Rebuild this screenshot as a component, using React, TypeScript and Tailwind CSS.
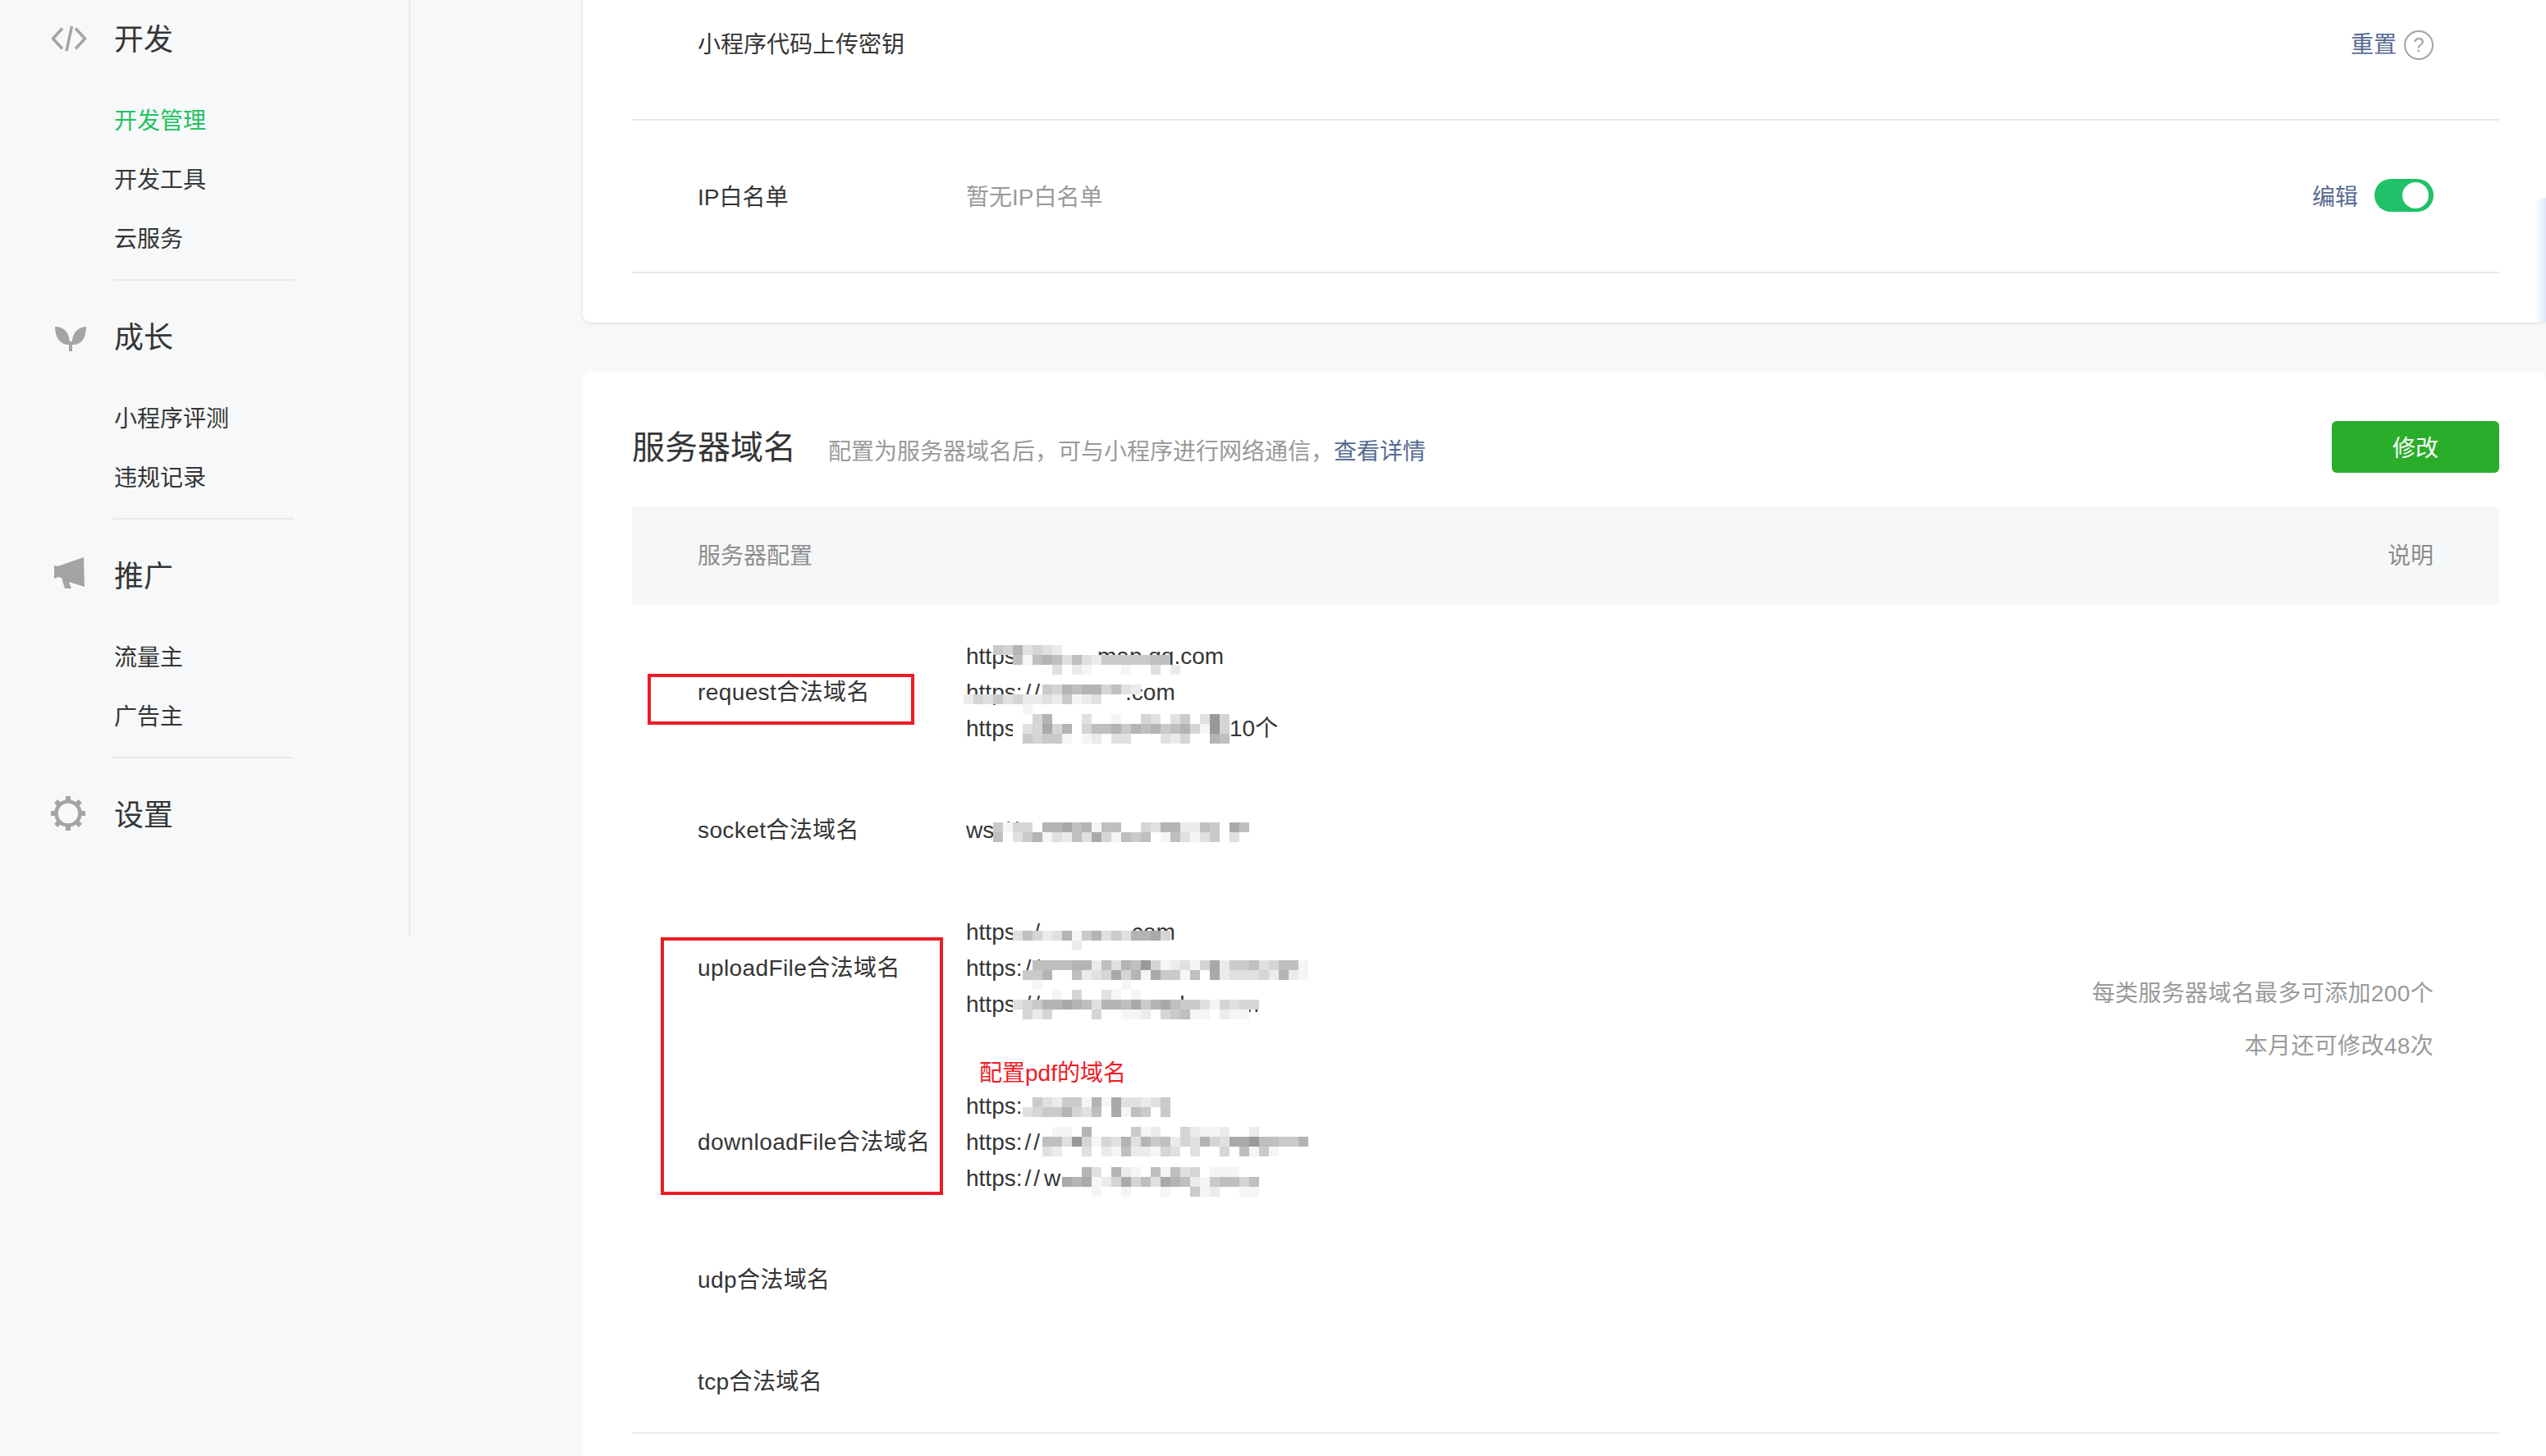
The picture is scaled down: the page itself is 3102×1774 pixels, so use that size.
const SHADES: Record<string, string> = {
  "0": "bg-white",
  "1": "bg-[#f5f5f5]",
  "2": "bg-[#ebebeb]",
  "3": "bg-[#e0e0e0]",
  "4": "bg-[#d5d5d5]",
  "5": "bg-[#cacaca]",
  "6": "bg-[#bfbfbf]",
  "7": "bg-[#b4b4b4]",
  "8": "bg-[#a9a9a9]",
  "9": "bg-[#999999]",
  ".": "",
};

interface DomainLine {
  scheme?: string;
  gap?: number;
  tail?: string;
  left: number;
  top: number;
  rows: string[];
}

const REQUEST_LINES: DomainLine[] = [
  {
    gap: 67,
    tail: "map.qq.com",
    left: 33,
    top: 9,
    rows: ["5473432", "..6167636325555566", "......3021000100302"],
  },
  {
    gap: 101,
    tail: ".com",
    left: -3,
    top: 13,
    rows: ["........5476774632", "24353422325123", "......1"],
  },
  {
    gap: 228,
    tail: "10个",
    left: 57,
    top: 5,
    rows: ["0047000300100430350394", "0348470466757675674194", "0545510120330003240076"],
  },
];

const SOCKET_LINES: DomainLine[] = [
  {
    scheme: "ws",
    left: 33,
    top: 13,
    rows: ["51440778671660043772265086", "6035713263841656016313503."],
  },
];

const UPLOAD_LINES: DomainLine[] = [
  {
    gap: 101,
    tail: ".com",
    left: 57,
    top: 9,
    rows: ["00", "3642371573537784", "......2"],
  },
  {
    left: 69,
    top: 13,
    rows: [".6666772637694123148255634661", "55700623484718551608233342721", ".1........1"],
  },
  {
    gap: 158,
    tail: "doc.com",
    left: 57,
    top: 5,
    rows: ["....10400310100", "3457787637768578655314344", "042400004001120456110211"],
  },
];

const DOWNLOAD_LINES: DomainLine[] = [
  { left: 69, top: 12, rows: ["053255171833235", "345574360816505"] },
  {
    left: 93,
    top: 4,
    rows: [".110700005120042112002", "663941437375624374388966557", "320030216221430300406151"],
  },
  {
    gap: 2,
    tail: "w",
    left: 117,
    top: 9,
    rows: ["..7307210616340111", "87812484638762156646", "...1..1...1..512..11"],
  },
];

function Mosaic({ left, top, rows }: { left: number; top: number; rows: string[] }) {
  return (
    <div className="absolute flex flex-col" style={{ left, top }}>
      {rows.map((row, i) => (
        <div key={i} className="flex">
          {row.split("").map((cell, j) => (
            <span key={j} className={`h-3 w-3 shrink-0 ${SHADES[cell]}`} />
          ))}
        </div>
      ))}
    </div>
  );
}

function ValueLine({ line }: { line: DomainLine }) {
  return (
    <div className="relative h-11 whitespace-nowrap leading-[45px]">
      {line.scheme ?? "https"}
      <span className="tracking-[3px]">://</span>
      {line.tail && (
        <>
          <span className="inline-block" style={{ width: line.gap }} />
          {line.tail}
        </>
      )}
      <Mosaic left={line.left} top={line.top} rows={line.rows} />
    </div>
  );
}

function ServerRow({ label, lines }: { label: string; lines?: DomainLine[] }) {
  return (
    <div className="flex items-center py-10">
      <div className="h-11 w-[407px] shrink-0 pl-20 leading-[45px] tracking-[0.4px]">{label}</div>
      <div className="min-h-11 flex-1">
        {lines?.map((line, i) => <ValueLine key={i} line={line} />)}
      </div>
    </div>
  );
}

function CodeIcon() {
  return (
    <svg width="44" height="32" viewBox="0 0 44 32" fill="none" stroke="#a3a4a5" strokeWidth="3.5" className="-mt-1">
      <path d="M14 3.5 2.5 16 14 28.5" />
      <path d="M25.5 1 19 31" />
      <path d="M30 3.5 41.5 16 30 28.5" />
    </svg>
  );
}

function SproutIcon() {
  return (
    <svg width="38" height="31" viewBox="0 0 38 31" fill="#a3a4a5" className="ml-[5px]">
      <path d="M0 1C10 1 18 7 18 23 8 24 0 16 0 1Z" />
      <path d="M38 1c0 15-7 23-17 22C20 8 28 2 38 1Z" />
      <path d="M17 19h4v12h-4z" />
    </svg>
  );
}

function MegaphoneIcon() {
  return (
    <svg width="38" height="39" viewBox="26 19 38 39" fill="#a3a4a5" className="-mt-[10px] ml-1">
      <path d="M26 30q0-1 2-1l2 1 32-11 1 36-19-6 3 8h-8l-4-13-5-1-2 2q-2 0-2-2Z" />
    </svg>
  );
}

function GearIcon() {
  return (
    <svg width="44" height="44" viewBox="0 0 44 44" fill="#a3a4a5" className="-mt-1">
      <circle cx="21" cy="21" r="14.5" fill="none" stroke="#a3a4a5" strokeWidth="4.5" />
      {[0, 45, 90, 135, 180, 225, 270, 315].map((deg) => (
        <rect key={deg} x="18" y="0" width="6" height="7" transform={`rotate(${deg} 21 21)`} />
      ))}
    </svg>
  );
}

function NavGroup({
  icon,
  title,
  items,
  last,
}: {
  icon: React.ReactNode;
  title: string;
  items?: { name: string; active?: boolean }[];
  last?: boolean;
}) {
  return (
    <div>
      <div className="flex h-[72px] items-center text-[36px] text-[#353535]">
        <div className="flex w-[77px] shrink-0 items-center">{icon}</div>
        {title}
      </div>
      {items && (
        <div className="mt-[27px]">
          {items.map((item) => (
            <div
              key={item.name}
              className={`ml-[77px] h-[72px] leading-[72px] ${item.active ? "text-[#22c262]" : "text-[#353535]"}`}
            >
              {item.name}
            </div>
          ))}
        </div>
      )}
      {!last && <div className="mb-[34px] ml-[76px] mt-[12px] h-0.5 w-[220px] bg-[#e7e8ea]" />}
    </div>
  );
}

export default function App() {
  return (
    <div className="flex h-[1774px] overflow-hidden bg-[#f6f8f9] text-[28px] text-[#353535] [font-family:'Liberation_Sans','Noto_Sans_CJK_SC',sans-serif]">
      <aside className="w-[710px] shrink-0">
        <nav className="h-[1139px] w-[500px] border-r-2 border-[#e7e8ea] pl-[62px] pt-[13px]">
          <NavGroup
            icon={<CodeIcon />}
            title="开发"
            items={[{ name: "开发管理", active: true }, { name: "开发工具" }, { name: "云服务" }]}
          />
          <NavGroup
            icon={<SproutIcon />}
            title="成长"
            items={[{ name: "小程序评测" }, { name: "违规记录" }]}
          />
          <NavGroup
            icon={<MegaphoneIcon />}
            title="推广"
            items={[{ name: "流量主" }, { name: "广告主" }]}
          />
          <NavGroup icon={<GearIcon />} title="设置" last />
        </nav>
      </aside>

      <main className="min-w-0 flex-1">
        <section className="relative -mt-10 h-[433px] rounded-b-[10px] bg-white pl-[60px] pr-[57px] shadow-[0_1px_4px_rgba(0,0,0,0.12)]">
          <div className="flex h-[187px] items-center border-b-2 border-[#e7e8ea] pl-20 pr-20 pt-1">
            <div className="flex-1">小程序代码上传密钥</div>
            <span className="text-[#576b95]">重置</span>
            <span className="ml-[9px] flex h-9 w-9 items-center justify-center rounded-full border-2 border-[#a3a4a5] text-[24px] text-[#a3a4a5]">
              ?
            </span>
          </div>
          <div className="flex h-[186px] items-center border-b-2 border-[#e7e8ea] pl-20 pr-20 pt-1">
            <div className="w-[327px]">IP白名单</div>
            <div className="flex-1 text-[#9a9a9a]">暂无IP白名单</div>
            <span className="text-[#576b95]">编辑</span>
            <span className="-mt-[6px] ml-5 flex h-10 w-[72px] items-center justify-end rounded-full bg-[#20c168] pr-[6px]">
              <span className="h-8 w-8 rounded-full bg-white" />
            </span>
          </div>
          <div className="absolute right-0 top-[281px] h-[152px] w-[14px] rounded-l-[14px] bg-gradient-to-r from-white to-[#dfe8fb]" />
        </section>

        <section className="mt-[60px] rounded-t-[10px] bg-white pb-10 pl-[60px] pr-[57px]">
          <div className="flex h-[164px] items-start pt-[60px]">
            <h2 className="pt-px text-[40px] leading-[63px]">服务器域名</h2>
            <p className="ml-[39px] flex-1 pt-[6px] leading-[63px] text-[#9a9a9a]">
              配置为服务器域名后，可与小程序进行网络通信，
              <span className="text-[#576b95]">查看详情</span>
            </p>
            <button
              type="button"
              className="h-[63px] w-[204px] rounded-[6px] bg-[#2aad2a] pt-1 text-white"
            >
              修改
            </button>
          </div>

          <div className="flex h-[120px] items-center justify-between bg-[#f6f7f9] px-20 pt-[2px] text-[#8d8d8d]">
            <span>服务器配置</span>
            <span>说明</span>
          </div>

          <div className="relative flex border-b-2 border-[#e7e8ea]">
            <div className="flex-1">
              <ServerRow label="request合法域名" lines={REQUEST_LINES} />
              <ServerRow label="socket合法域名" lines={SOCKET_LINES} />
              <ServerRow label="uploadFile合法域名" lines={UPLOAD_LINES} />
              <ServerRow label="downloadFile合法域名" lines={DOWNLOAD_LINES} />
              <ServerRow label="udp合法域名" />
              <ServerRow label="tcp合法域名" />
            </div>
            <div className="flex flex-col items-end justify-center pr-20 pt-[3px] leading-[64px] tracking-[0.35px] text-[#9a9a9a]">
              <div>每类服务器域名最多可添加200个</div>
              <div>本月还可修改48次</div>
            </div>

            <div className="absolute left-[19px] top-[84px] h-[62px] w-[325px] border-4 border-[#ec1c24]" />
            <div className="absolute left-[35px] top-[405px] h-[314px] w-[344px] border-4 border-[#ec1c24]" />
            <div className="absolute left-[423px] top-[549px] leading-[44px] text-[#ee1c25]">
              配置pdf的域名
            </div>
          </div>
        </section>
      </main>
    </div>
  );
}
